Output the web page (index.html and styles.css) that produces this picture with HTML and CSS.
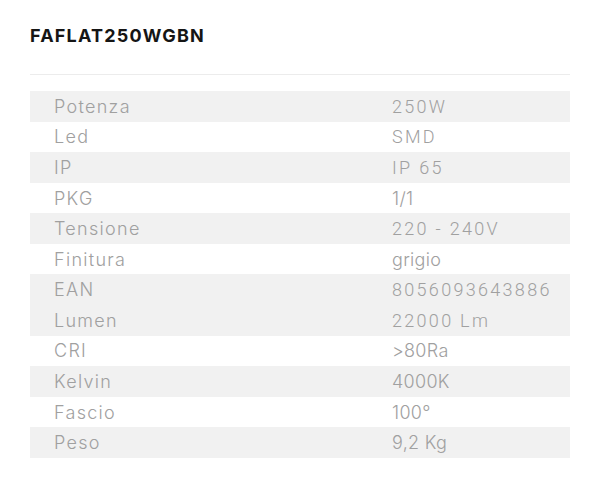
FILE: index.html
```html
<!DOCTYPE html>
<html lang="it">
<head>
<meta charset="utf-8">
<title>FAFLAT250WGBN</title>
<link rel="stylesheet" href="styles.css">
</head>
<body>
<div class="page">
  <h1 class="title">FAFLAT250WGBN</h1>
  <div class="divider"></div>
  <div class="specs">
    <div class="row alt"><div class="label">Potenza</div><div class="value helv">250W</div></div>
    <div class="row"><div class="label">Led</div><div class="value helv">SMD</div></div>
    <div class="row alt"><div class="label">IP</div><div class="value helv">IP 65</div></div>
    <div class="row"><div class="label">PKG</div><div class="value">1/1</div></div>
    <div class="row alt"><div class="label">Tensione</div><div class="value helv">220 - 240V</div></div>
    <div class="row"><div class="label">Finitura</div><div class="value">grigio</div></div>
    <div class="row alt"><div class="label">EAN</div><div class="value helv">8056093643886</div></div>
    <div class="row alt"><div class="label">Lumen</div><div class="value helv">22000 Lm</div></div>
    <div class="row"><div class="label">CRI</div><div class="value">&gt;80Ra</div></div>
    <div class="row alt"><div class="label">Kelvin</div><div class="value">4000K</div></div>
    <div class="row"><div class="label">Fascio</div><div class="value">100°</div></div>
    <div class="row alt"><div class="label">Peso</div><div class="value">9,2 Kg</div></div>
  </div>
</div>
</body>
</html>
```

FILE: styles.css
```css
html, body {
  margin: 0;
  padding: 0;
  background: #ffffff;
}

.page {
  padding: 24px 30px 0 30px;
  font-family: Inter, "Noto Sans", sans-serif;
}

.title {
  margin: 0;
  font-size: 18px;
  font-weight: 700;
  line-height: 24px;
  color: #151515;
  letter-spacing: 1.2px;
}

.divider {
  margin-top: 26px;
  height: 1px;
  background: #ececec;
}

.specs {
  margin-top: 16px;
  display: flex;
  flex-direction: column;
}

.row {
  display: grid;
  grid-template-columns: 338px 1fr;
  height: 30.58px;
  align-items: center;
}

.row.alt {
  background: #f1f1f1;
}

.label, .value {
  padding-left: 24px;
  font-size: 18px;
  font-weight: 300;
  color: #a0a0a0;
  white-space: nowrap;
}

.label {
  letter-spacing: 1.3px;
}

.value {
  letter-spacing: 0.3px;
}

.value.helv {
  font-family: Roboto, "Liberation Sans", sans-serif;
  font-weight: 300;
  letter-spacing: 2.3px;
}
```
